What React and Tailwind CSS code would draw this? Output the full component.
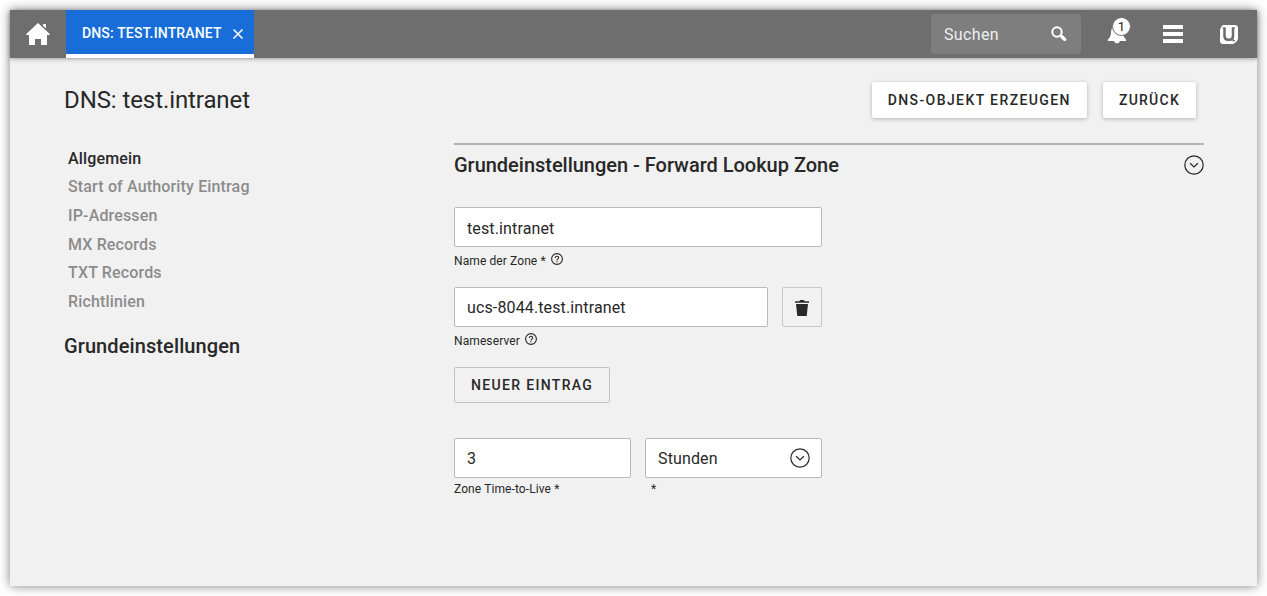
import React from "react";

const sections = [
  "Allgemein",
  "Start of Authority Eintrag",
  "IP-Adressen",
  "MX Records",
  "TXT Records",
  "Richtlinien",
];

function HomeIcon() {
  return (
    <svg className="block h-[22px] w-6" viewBox="0 0 24 22" fill="#fff">
      <path d="M12 0 24 11.3l-.6.7H21v10h-6v-6H9v6H3V12H.6L0 11.3z" />
      <path d="M17 1h3v4.5l-3-2.8z" />
    </svg>
  );
}

function SearchIcon() {
  return (
    <svg className="block size-4" viewBox="0 0 16 16" fill="none" stroke="#fff">
      <circle cx="6" cy="6" r="4.7" strokeWidth="2" />
      <path d="M9.4 9.2 11 10.800" strokeWidth="2" />
      <path d="M11 10.800 13.600 13.400" strokeWidth="3.4" strokeLinecap="round" />
    </svg>
  );
}

function BellIcon() {
  return (
    <svg className="block h-[18px] w-5" viewBox="0 0 20 18" fill="#fff">
      <path d="M10 0C6 0 4.200 2.500 4.100 6 4 9.500 3.200 11.300.8 13.600V15H7c.6 1.600 1.600 2.300 3 2.300s2.400-.7 3-2.300h6v-1.400c-2.200-2.200-2.900-4.200-3-7.600C15.900 2.500 14 0 10 0z" />
    </svg>
  );
}

function BrandIcon() {
  return (
    <svg className="block h-[19px] w-[18px]" viewBox="0 0 18 19">
      <path
        d="M5 0h10q3 0 3 3v10q0 2-1.500 3.500T13 19H3q-3 0-3-3V6q0-2.500 1.500-4.500T5 0z"
        fill="#fff"
      />
      <path
        d="M4.500 2.500v8.500q0 3.700 3.500 3.700h1.500q3.500 0 3.500-3.700V2.500"
        fill="none"
        stroke="#6e6e6e"
        strokeWidth="2.500"
      />
      <path d="M13 11v4.700h2" fill="none" stroke="#6e6e6e" strokeWidth="1.200" />
      <path d="M2.500 3H5M12 3h3" stroke="#6e6e6e" />
    </svg>
  );
}

function CircleChevron() {
  return (
    <svg
      className="block size-5 shrink-0"
      viewBox="0 0 20 20"
      fill="none"
      stroke="#282828"
      strokeWidth="1.200"
    >
      <circle cx="10" cy="10" r="9.2" />
      <path d="m6.100 8.300 3.900 3.700 3.900-3.700" />
    </svg>
  );
}

function HelpIcon() {
  return (
    <svg
      className="block size-3"
      viewBox="0 0 12 12"
      fill="none"
      stroke="#282828"
    >
      <circle cx="6" cy="6" r="5.4" strokeWidth="1.1" />
      <path
        d="M4.300 4.900c0-1 .7-1.600 1.700-1.600s1.700.6 1.700 1.500C7.700 5.900 6 6 6 7.400"
        strokeWidth="1.100"
      />
      <path d="M6 8.200v1.100" strokeWidth="1.200" />
    </svg>
  );
}

function TrashIcon() {
  return (
    <svg className="block h-4 w-[14px]" viewBox="0 0 14 16" fill="#282828">
      <path d="M0 1.200h4.500L5 0h4l.5 1.200H14v1.600H0zM1 4h12l-1.300 12H2.300z" />
    </svg>
  );
}

const field =
  "flex h-10 items-center rounded-[2px] border border-[#b9b9b9] bg-white pl-3 pr-[11px] text-base tracking-[0.13px]";

function Caption({ children, help }) {
  return (
    <div className="flex h-4 items-center text-xs leading-4 tracking-[0.1px]">
      <span>{children}</span>
      {help && (
        <span className="-mt-[5px] ml-[5px]">
          <HelpIcon />
        </span>
      )}
    </div>
  );
}

function Header() {
  return (
    <header className="flex h-12 items-stretch bg-[#6e6e6e] text-white shadow-[0_1px_4px_rgba(0,0,0,0.35)]">
      <div className="flex w-14 items-center justify-center">
        <HomeIcon />
      </div>
      <div className="flex w-[188px] items-center border-b-4 border-white bg-[#186dd9] pl-4 text-sm font-medium">
        <span className="w-[140px] whitespace-nowrap pt-0.5 tracking-[0.15px]">
          DNS: TEST.INTRANET
        </span>
        <svg
          className="mt-1 ml-[11px] block size-[10px]"
          viewBox="0 0 10 10"
          stroke="#fff"
          strokeWidth="1.5"
        >
          <path d="m.5.500 9 9m0-9-9 9" />
        </svg>
      </div>
      <div className="mt-1 ml-auto flex h-10 w-[150px] items-center justify-between rounded-[4px] bg-[#7e7e7e] pr-[14px] pl-[13px] text-base tracking-[0.35px]">
        <span className="pt-0.5 text-[#eeeeee]">Suchen</span>
        <SearchIcon />
      </div>
      <div className="relative ml-[26px] flex w-5 items-start pt-4">
        <BellIcon />
        <span className="absolute top-[7px] left-[5px] flex size-[19px] items-center justify-center rounded-full border border-[#6e6e6e] bg-white text-[13px] text-[#222]">
          1
        </span>
      </div>
      <div className="ml-9 flex w-5 flex-col gap-[3px] pt-[15px]">
        <div className="h-1 bg-white" />
        <div className="h-1 bg-white" />
        <div className="h-1 bg-white" />
      </div>
      <div className="mr-[19px] ml-[37px] pt-[15px]">
        <BrandIcon />
      </div>
    </header>
  );
}

function RaisedButton({ children }) {
  return (
    <button className="flex h-9 items-center rounded-[2px] bg-white px-4 text-sm font-medium whitespace-nowrap shadow-[0_1px_4px_rgba(0,0,0,0.26)]">
      {children}
    </button>
  );
}

export default function App() {
  return (
    <div className="h-[596px] w-[1267px] overflow-hidden bg-white p-[10px] font-['Roboto',sans-serif] text-[#282828]">
      <div className="h-[576px] w-[1247px] bg-[#f1f1f1] shadow-[0_0_10px_rgba(0,0,0,0.5)]">
        <Header />
        <div className="flex h-[85px] items-start justify-between pt-6 pr-[61px] pl-[54px]">
          <h1 className="text-2xl leading-9 tracking-[-0.09px]">
            DNS: test.intranet
          </h1>
          <div className="flex gap-4">
            <RaisedButton>
              <span className="tracking-[1.4px]">DNS-OBJEKT ERZEUGEN</span>
            </RaisedButton>
            <RaisedButton>
              <span className="tracking-[1.25px]">ZURÜCK</span>
            </RaisedButton>
          </div>
        </div>
        <div className="flex pl-[54px]">
          <nav className="w-[390px] pt-[1.5px]">
            <ul className="pl-1 text-base leading-[28.7px] font-medium tracking-[0.15px]">
              {sections.map((name, i) => (
                <li key={name} className={i === 0 ? "" : "text-[#8c8c8c]"}>
                  {name}
                </li>
              ))}
            </ul>
            <h2 className="mt-[14px] text-xl leading-[30px] font-medium tracking-[0.1px]">
              Grundeinstellungen
            </h2>
          </nav>
          <main className="w-[750px] border-t-2 border-[#b3b3b3]">
            <div className="flex h-10 items-center justify-between">
              <h2 className="text-xl font-medium tracking-[-0.02px]">
                Grundeinstellungen - Forward Lookup Zone
              </h2>
              <CircleChevron />
            </div>
            <div className="w-[368px] pt-[22px]">
              <div className={`${field} pt-[3px]`}>test.intranet</div>
              <div className="pt-[6px]">
                <Caption help>Name der Zone *</Caption>
              </div>
              <div className="mt-[18px] flex gap-[14px]">
                <div className={`${field} w-[314px] pt-0.5`}>
                  ucs-8044.test.intranet
                </div>
                <button className="flex size-10 items-center justify-center rounded-[2px] border border-[#c8c8c8] pt-0.5">
                  <TrashIcon />
                </button>
              </div>
              <div className="pt-[6px]">
                <Caption help>Nameserver</Caption>
              </div>
              <button className="mt-[18px] flex h-9 items-center rounded-[2px] border border-[#c3c3c3] px-4 text-sm font-medium tracking-[1.33px]">
                NEUER EINTRAG
              </button>
              <div className="mt-[35px] flex gap-[14px]">
                <div className="w-[177px]">
                  <div className={`${field} pt-0.5`}>3</div>
                  <div className="pt-[3px]">
                    <Caption>Zone Time-to-Live *</Caption>
                  </div>
                </div>
                <div className="w-[177px]">
                  <div className={`${field} justify-between pt-0.5`}>
                    Stunden
                    <span className="-mt-0.5">
                      <CircleChevron />
                    </span>
                  </div>
                  <div className="pt-[3px] pl-[6px]">
                    <Caption>*</Caption>
                  </div>
                </div>
              </div>
            </div>
          </main>
        </div>
      </div>
    </div>
  );
}
